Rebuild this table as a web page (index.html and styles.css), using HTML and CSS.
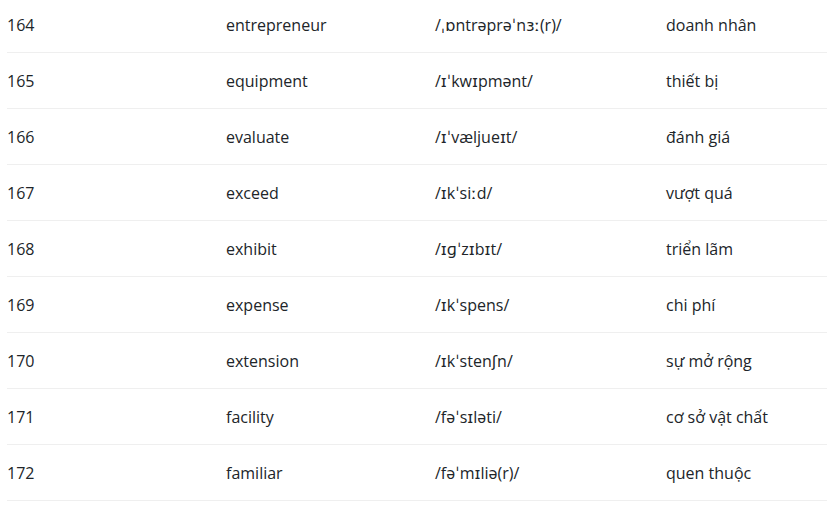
FILE: index.html
```html
<!DOCTYPE html>
<html lang="vi">
<head>
<meta charset="utf-8">
<link rel="stylesheet" href="styles.css">
</head>
<body>
<table class="vocab">
<colgroup><col class="c-num"><col class="c-word"><col class="c-ipa"><col class="c-mean"></colgroup>
<tbody>
<tr><td>164</td><td>entrepreneur</td><td class="ipa">/ˌɒntrəprəˈnɜː(r)/</td><td>doanh nhân</td></tr>
<tr><td>165</td><td>equipment</td><td class="ipa">/ɪˈkwɪpmənt/</td><td>thiết bị</td></tr>
<tr><td>166</td><td>evaluate</td><td class="ipa">/ɪˈvæljueɪt/</td><td>đánh giá</td></tr>
<tr><td>167</td><td>exceed</td><td class="ipa">/ɪkˈsiːd/</td><td>vượt quá</td></tr>
<tr><td>168</td><td>exhibit</td><td class="ipa">/ɪɡˈzɪbɪt/</td><td>triển lãm</td></tr>
<tr><td>169</td><td>expense</td><td class="ipa">/ɪkˈspens/</td><td>chi phí</td></tr>
<tr><td>170</td><td>extension</td><td class="ipa">/ɪkˈstenʃn/</td><td>sự mở rộng</td></tr>
<tr><td>171</td><td>facility</td><td class="ipa">/fəˈsɪləti/</td><td>cơ sở vật chất</td></tr>
<tr><td>172</td><td>familiar</td><td class="ipa">/fəˈmɪliə(r)/</td><td>quen thuộc</td></tr>
</tbody>
</table>
</body>
</html>
```
FILE: styles.css
```css
html, body {
  margin: 0;
  padding: 0;
  background: #ffffff;
}
body {
  padding-left: 7px;
  font-family: "Open Sans", "Noto Sans", sans-serif;
  font-size: 16px;
  color: #212529;
  overflow: hidden;
}
.vocab {
  margin-top: -3px;
  width: 820px;
  border-collapse: collapse;
  table-layout: fixed;
}
.c-num { width: 219px; }
.c-word { width: 209px; }
.c-ipa { width: 231px; }
.c-mean { width: 161px; }
.vocab td {
  height: 55px;
  padding: 0;
  vertical-align: middle;
  border-bottom: 1px solid #efefef;
  white-space: nowrap;
}
.vocab td.ipa {
  font-family: "Open Sans", "DejaVu Sans", sans-serif;
}
```
